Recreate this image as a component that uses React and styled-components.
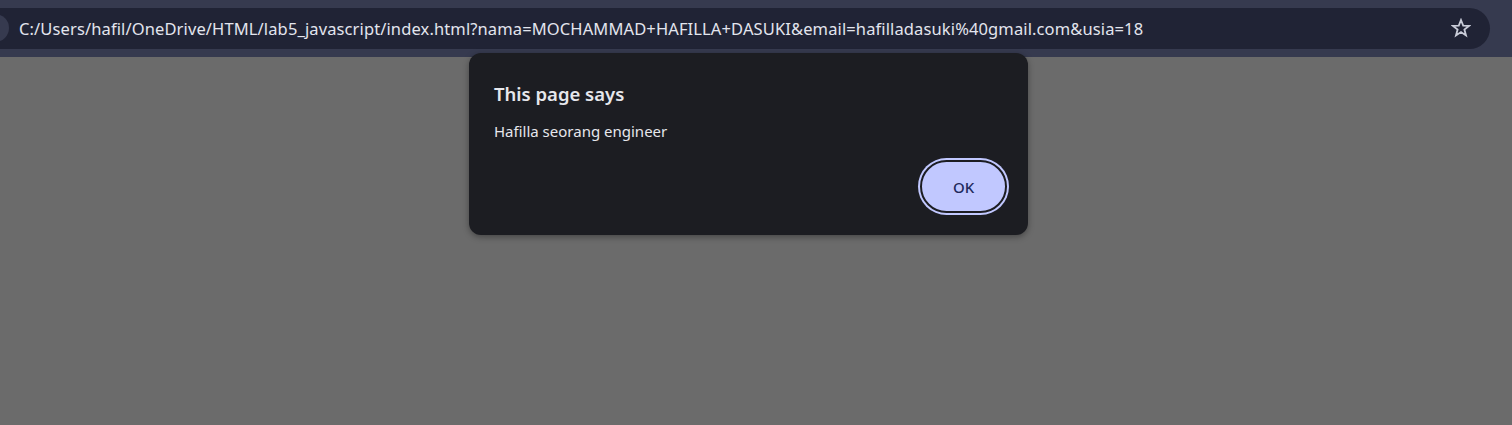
import React from "react";
import styled, { createGlobalStyle } from "styled-components";

const Global = createGlobalStyle`
  html, body {
    margin: 0;
    padding: 0;
    background: #6b6b6b;
    overflow: hidden;
  }
  body {
    font-family: "Noto Sans", "Open Sans", sans-serif;
  }
`;

const Page = styled.div`
  position: relative;
  width: 1512px;
  height: 425px;
  display: flex;
  flex-direction: column;
`;

const Toolbar = styled.div`
  height: 57px;
  background: #363a4f;
  display: flex;
  align-items: center;
  padding: 0 22px 1px 0;
  box-sizing: border-box;
`;

const Omnibox = styled.div`
  flex: 1;
  height: 41px;
  margin-left: -26px;
  background: #202335;
  border-radius: 21px;
  display: flex;
  align-items: center;
  padding: 0 17px 0 7px;
`;

const SiteChip = styled.div`
  width: 28px;
  height: 28px;
  border-radius: 50%;
  background: #363a4f;
  flex: none;
`;

const Url = styled.div`
  flex: 1;
  margin-left: 10px;
  color: #e3e5ee;
  font-size: 16.5px;
  letter-spacing: 0.12px;
  white-space: nowrap;
`;

const StarButton = styled.div`
  width: 24px;
  height: 24px;
  display: flex;
  align-items: center;
  justify-content: center;
`;

const Content = styled.div`
  flex: 1;
  background: #6b6b6b;
`;

const Dialog = styled.div`
  position: absolute;
  top: 53px;
  left: 469px;
  width: 559px;
  height: 182px;
  box-sizing: border-box;
  background: #1c1d22;
  border-radius: 12px;
  box-shadow: 0 2px 6px rgba(0, 0, 0, 0.35);
  padding: 28px 19px 20px 25px;
  display: flex;
  flex-direction: column;
`;

const Title = styled.div`
  color: #e6e7ec;
  font-size: 18.5px;
  font-weight: 600;
  line-height: 25px;
`;

const Message = styled.div`
  margin-top: 15px;
  color: #e6e7ec;
  font-size: 15px;
  line-height: 20px;
`;

const Actions = styled.div`
  margin-top: auto;
  display: flex;
  justify-content: flex-end;
`;

const OkButton = styled.button`
  width: 87px;
  height: 53px;
  margin: 2px;
  border-radius: 27px;
  border: 2px solid #1c1d22;
  background: #c1c8ff;
  box-shadow: 0 0 0 2px #c1c8ff;
  color: #1f2a5c;
  font-family: "Noto Sans", "Open Sans", sans-serif;
  font-size: 15px;
  font-weight: 500;
  cursor: pointer;
`;

function StarIcon() {
  return (
    <svg width="20" height="20" viewBox="0 0 20 20">
      <polygon
        points="10,2 12.2,7.6 18,7.9 13.4,11.6 15,17.4 10,14.1 5,17.4 6.6,11.6 2,7.9 7.8,7.6"
        fill="none"
        stroke="#c9ccd8"
        strokeWidth="1.8"
        strokeLinejoin="miter"
      />
    </svg>
  );
}

export default function App() {
  return (
    <Page>
      <Global />
      <Toolbar>
        <Omnibox>
          <SiteChip />
          <Url>
            C:/Users/hafil/OneDrive/HTML/lab5_javascript/index.html?nama=MOCHAMMAD+HAFILLA+DASUKI&amp;email=hafilladasuki%40gmail.com&amp;usia=18
          </Url>
          <StarButton>
            <StarIcon />
          </StarButton>
        </Omnibox>
      </Toolbar>
      <Content />
      <Dialog>
        <Title>This page says</Title>
        <Message>Hafilla seorang engineer</Message>
        <Actions>
          <OkButton>OK</OkButton>
        </Actions>
      </Dialog>
    </Page>
  );
}
